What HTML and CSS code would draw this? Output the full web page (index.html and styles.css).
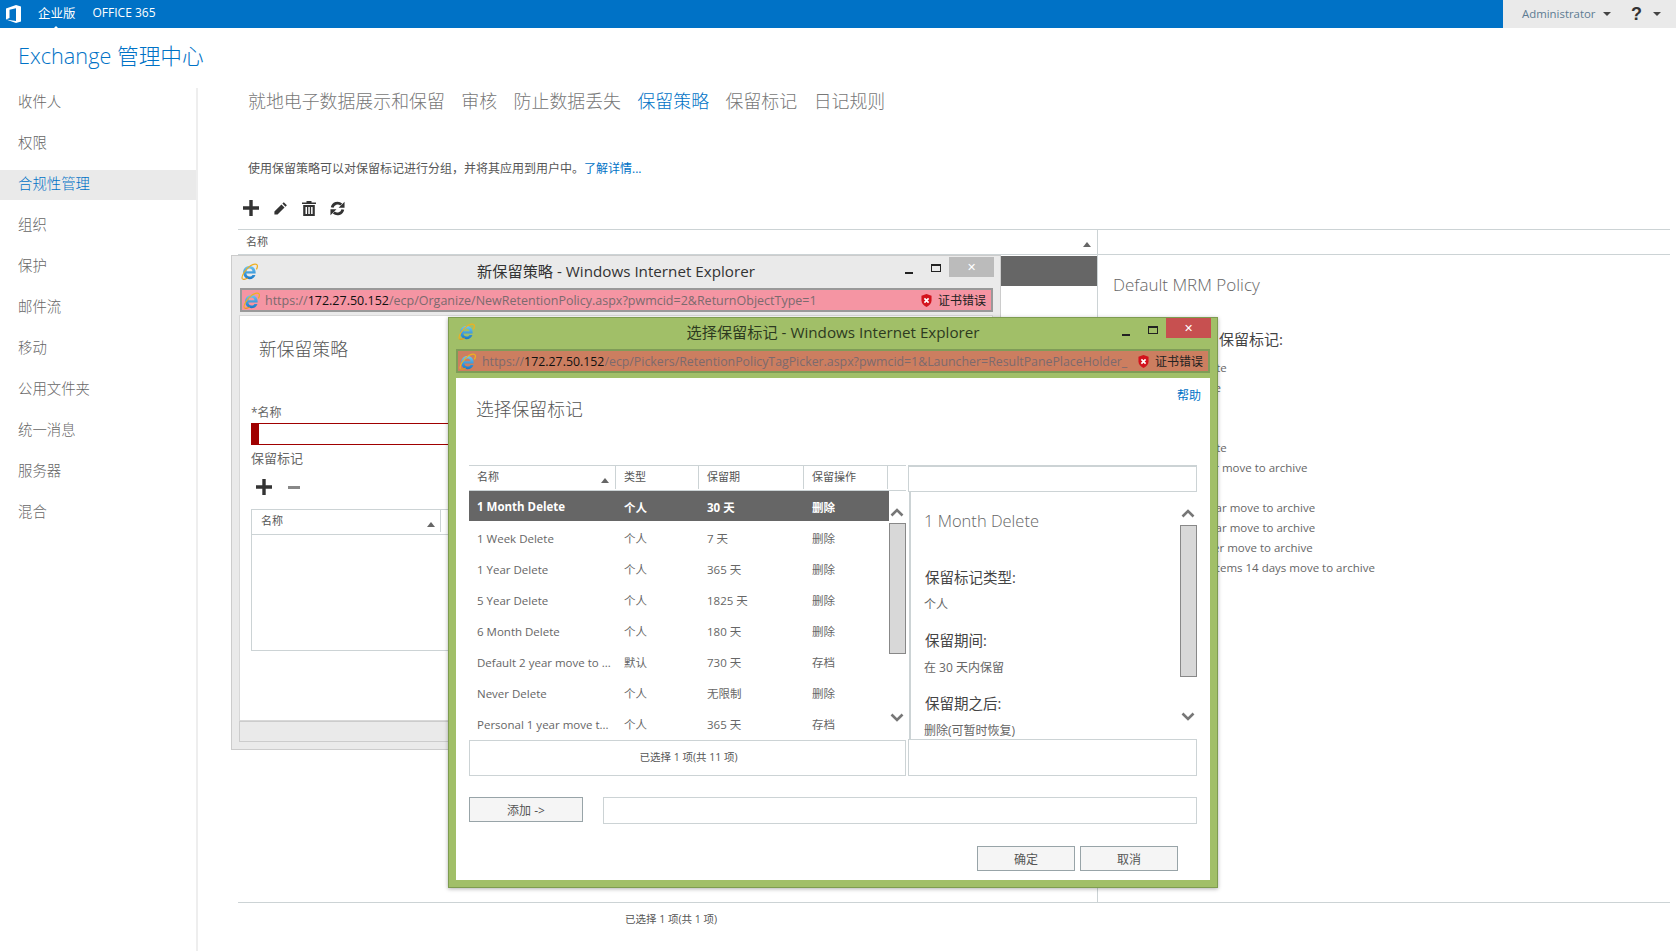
FILE: index.html
```html
<!DOCTYPE html>
<html lang="zh-CN">
<head>
<meta charset="utf-8">
<title>Exchange 管理中心</title>
<link rel="stylesheet" href="styles.css">
</head>
<body>
<svg class="defs" width="0" height="0" aria-hidden="true">
  <defs>
    <linearGradient id="ieblue" x1="0" y1="0" x2="0" y2="1">
      <stop offset="0" stop-color="#6fc6f2"/>
      <stop offset="1" stop-color="#1878c8"/>
    </linearGradient>
    <symbol id="ie" viewBox="0 0 18 18">
      <path fill-rule="evenodd" d="M9 3.200c3.800 0 6.500 2.900 6.500 6.700v1.300H5.700c.2 2 1.500 3.200 3.400 3.200 1.400 0 2.400-.6 3-1.700h3.200c-.9 2.800-3.300 4.400-6.200 4.400-3.900 0-6.800-2.900-6.800-7s2.800-6.900 6.700-6.900zM5.800 8.800h6.400c-.2-1.700-1.400-2.900-3.200-2.900S6.100 7.100 5.800 8.800z" fill="url(#ieblue)"/>
      <path d="M1.500 16.800C-.2 14.500 4.500 6.500 10 3c3.200-2 6.800-2.500 7.300-.4.300 1.400-.3 3-1 4.200" fill="none" stroke="#f0b020" stroke-width="1.300"/>
      <path d="M1.500 16.800c1.300 1 3.500.4 5.500-.9" fill="none" stroke="#e89a10" stroke-width="1.100"/>
    </symbol>
    <symbol id="shield" viewBox="0 0 12 14">
      <path d="M6 0l5.500 1.800V7c0 3.300-2.300 5.600-5.500 7C2.800 12.600.5 10.300.5 7V1.800z" fill="#d3121c"/>
      <path d="M3.700 4.700l4.600 4.600M8.300 4.700L3.700 9.300" stroke="#fff" stroke-width="1.800"/>
    </symbol>
    <symbol id="plus" viewBox="0 0 16 16"><path d="M6.300 0h3.400v6.300H16v3.400H9.700V16H6.300V9.700H0V6.300h6.300z" fill="#333"/></symbol>
    <symbol id="chev-up" viewBox="0 0 14 10"><path d="M1.500 8.500L7 3l5.500 5.500" fill="none" stroke="#777" stroke-width="2.600"/></symbol>
    <symbol id="chev-down" viewBox="0 0 14 10"><path d="M1.500 1.500L7 7l5.500-5.500" fill="none" stroke="#777" stroke-width="2.600"/></symbol>
  </defs>
</svg>

<header class="topbar">
  <div class="topbar-left">
    <svg class="office" viewBox="0 0 16 18" width="16" height="18"><path d="M0 3.500L10 0l5 1.500v15L10 18 0 14.500l10 1.500V3.200L3.500 4.700v8.200L0 14.500z" fill="#fff"/></svg>
    <span class="brand current">企业版</span>
    <span class="brand">OFFICE 365</span>
  </div>
  <div class="topbar-right">
    <span class="admin">Administrator</span>
    <span class="caret"></span>
    <span class="help">?</span>
    <span class="caret"></span>
  </div>
</header>

<h1 class="apptitle">Exchange 管理中心</h1>

<div class="shell">
  <nav class="sidebar">
    <a class="side-item">收件人</a>
    <a class="side-item">权限</a>
    <a class="side-item active">合规性管理</a>
    <a class="side-item">组织</a>
    <a class="side-item">保护</a>
    <a class="side-item">邮件流</a>
    <a class="side-item">移动</a>
    <a class="side-item">公用文件夹</a>
    <a class="side-item">统一消息</a>
    <a class="side-item">服务器</a>
    <a class="side-item">混合</a>
  </nav>

  <main class="content">
    <div class="tabs">
      <a>就地电子数据展示和保留</a>
      <a>审核</a>
      <a>防止数据丢失</a>
      <a class="active">保留策略</a>
      <a>保留标记</a>
      <a>日记规则</a>
    </div>
    <p class="intro">使用保留策略可以对保留标记进行分组，并将其应用到用户中。<a class="link">了解详情...</a></p>
    <div class="toolbar">
      <svg width="16" height="16"><use href="#plus"/></svg>
      <svg viewBox="0 0 16 16" width="15" height="15"><path d="M11.500 1.200l3.300 3.300-1.500 1.500L10 2.700zM9 3.700l3.300 3.300-7.500 7.500H1.500v-3.300z" fill="#333"/></svg>
      <svg viewBox="0 0 14 15" width="14" height="15"><path d="M4.500 0h5v1.400H14V3H0V1.400h4.500zM1.200 4h11.600v11H1.200zM3.500 6v7h1.500V6zm2.800 0v7h1.500V6zm2.800 0v7h1.500V6z" fill="#333" fill-rule="evenodd"/></svg>
      <svg viewBox="0 0 16 16" width="15" height="15"><path d="M2.300 7A5.900 5.900 0 0 1 12 3.800M13.700 9A5.900 5.900 0 0 1 4 12.200" fill="none" stroke="#333" stroke-width="3"/><path d="M15.500 .8v6.400H9.100zM.5 15.200V8.800h6.400z" fill="#333"/></svg>
    </div>
    <div class="listing">
      <section class="list-col">
        <div class="list-head"><span>名称</span><i class="sort"></i></div>
        <div class="list-selected"></div>
      </section>
      <aside class="detail-col">
        <div class="detail-head"></div>
        <h2 class="detail-name">Default MRM Policy</h2>
        <h3 class="detail-label">保留标记:</h3>
        <ul class="tag-list">
          <li>1 Month Delete</li>
          <li>1 Week Delete</li>
          <li>1 Year Delete</li>
          <li>5 Year Delete</li>
          <li>6 Month Delete</li>
          <li>Default 2 year move to archive</li>
          <li>Never Delete</li>
          <li>Personal 1 year move to archive</li>
          <li>Personal 5 year move to archive</li>
          <li>Personal never move to archive</li>
          <li>Recoverable Items 14 days move to archive</li>
        </ul>
      </aside>
    </div>
    <div class="status">已选择 1 项(共 1 项)</div>
  </main>
</div>

<section class="win win-back">
  <div class="win-title">
    <svg class="ie" width="17" height="17"><use href="#ie"/></svg>
    <span class="win-caption">新保留策略 - Windows Internet Explorer</span>
    <span class="win-min"></span>
    <span class="win-max"></span>
    <span class="win-close">✕</span>
  </div>
  <div class="addr">
    <svg class="ie" width="17" height="17"><use href="#ie"/></svg>
    <span class="url">https://<b>172.27.50.152</b>/ecp/Organize/NewRetentionPolicy.aspx?pwmcid=2&amp;ReturnObjectType=1</span>
    <svg class="shield" width="11" height="13"><use href="#shield"/></svg>
    <span class="cert">证书错误</span>
  </div>
  <div class="win-body back-body">
    <h2 class="dlg-title">新保留策略</h2>
    <label class="field-label">*名称</label>
    <div class="bad-input"></div>
    <div class="field-label2">保留标记</div>
    <div class="mini-tools">
      <svg width="16" height="16"><use href="#plus"/></svg>
      <span class="minus"></span>
    </div>
    <div class="mini-table">
      <div class="mini-head"><span>名称</span><i class="sort"></i></div>
    </div>
  </div>
  <div class="back-foot"></div>
</section>

<section class="win win-front">
  <div class="win-title">
    <svg class="ie" width="17" height="17"><use href="#ie"/></svg>
    <span class="win-caption">选择保留标记 - Windows Internet Explorer</span>
    <span class="win-min"></span>
    <span class="win-max"></span>
    <span class="win-close red">✕</span>
  </div>
  <div class="addr">
    <svg class="ie" width="17" height="17"><use href="#ie"/></svg>
    <span class="url">https://<b>172.27.50.152</b>/ecp/Pickers/RetentionPolicyTagPicker.aspx?pwmcid=1&amp;Launcher=ResultPanePlaceHolder_</span>
    <svg class="shield" width="11" height="13"><use href="#shield"/></svg>
    <span class="cert">证书错误</span>
  </div>
  <div class="win-body front-body">
    <div class="dlg-top">
      <h2 class="dlg-title">选择保留标记</h2>
      <a class="link helplink">帮助</a>
    </div>
    <div class="picker">
      <div class="pick-left">
        <div class="pick-head">
          <span class="c1">名称<i class="sort"></i></span>
          <span class="c2">类型</span>
          <span class="c3">保留期</span>
          <span class="c4">保留操作</span>
          <span class="c5"></span>
        </div>
        <div class="pick-scroller">
          <div class="rows">
            <div class="row sel"><span>1 Month Delete</span><span>个人</span><span>30 天</span><span>删除</span></div>
            <div class="row"><span>1 Week Delete</span><span>个人</span><span>7 天</span><span>删除</span></div>
            <div class="row"><span>1 Year Delete</span><span>个人</span><span>365 天</span><span>删除</span></div>
            <div class="row"><span>5 Year Delete</span><span>个人</span><span>1825 天</span><span>删除</span></div>
            <div class="row"><span>6 Month Delete</span><span>个人</span><span>180 天</span><span>删除</span></div>
            <div class="row"><span>Default 2 year move to ...</span><span>默认</span><span>730 天</span><span>存档</span></div>
            <div class="row"><span>Never Delete</span><span>个人</span><span>无限制</span><span>删除</span></div>
            <div class="row"><span>Personal 1 year move t...</span><span>个人</span><span>365 天</span><span>存档</span></div>
          </div>
          <div class="vscroll list-scroll">
            <svg width="14" height="10"><use href="#chev-up"/></svg>
            <div class="thumb"></div>
            <svg class="chev-bottom" width="14" height="10"><use href="#chev-down"/></svg>
          </div>
        </div>
        <div class="pick-summary">已选择 1 项(共 11 项)</div>
      </div>
      <div class="pick-right">
        <div class="search-box"></div>
        <div class="preview">
          <div class="preview-text">
            <h3 class="pv-name">1 Month Delete</h3>
            <h4 class="pv-label">保留标记类型:</h4>
            <p class="pv-value">个人</p>
            <h4 class="pv-label">保留期间:</h4>
            <p class="pv-value">在 30 天内保留</p>
            <h4 class="pv-label">保留期之后:</h4>
            <p class="pv-value">删除(可暂时恢复)</p>
          </div>
          <div class="vscroll pv-scroll">
            <svg width="14" height="10"><use href="#chev-up"/></svg>
            <div class="thumb"></div>
            <svg class="chev-bottom" width="14" height="10"><use href="#chev-down"/></svg>
          </div>
        </div>
        <div class="pv-foot"></div>
      </div>
    </div>
    <div class="add-row">
      <button class="btn add-btn">添加 -&gt;</button>
      <div class="added-box"></div>
    </div>
    <div class="actions">
      <button class="btn act-btn">确定</button>
      <button class="btn act-btn">取消</button>
    </div>
  </div>
</section>
</body>
</html>
```

FILE: styles.css
```css
* { box-sizing: border-box; }
html, body { margin: 0; height: 951px; overflow: hidden; }
body {
  position: relative;
  background: #fff;
  color: #666;
  font-family: "Open Sans", "Noto Sans CJK SC", sans-serif;
  font-size: 12px;
}
h1, h2, h3, h4, p, ul { margin: 0; padding: 0; font-weight: 400; }
ul { list-style: none; }
.defs { position: absolute; }
a { cursor: pointer; }
.link { color: #0072c6; }

/* top bar */
.topbar {
  height: 28px;
  background: #0072c6;
  display: flex;
  justify-content: space-between;
}
.topbar-left { display: flex; align-items: center; color: #fff; padding-left: 6px; }
.office { margin-right: 16px; }
.brand { font-size: 12px; margin-right: 17px; margin-top: -4px; position: relative; }
.brand.current { font-size: 12.500px; }
.brand.current::after {
  content: "";
  position: absolute;
  left: 14px;
  bottom: -8px;
  border: 4px solid transparent;
  border-top: 0;
  border-bottom-color: #fff;
}
.topbar-right {
  width: 173px;
  background: #eaeaea;
  display: flex;
  align-items: center;
  padding-left: 19px;
}
.admin { color: #5d7b92; font-size: 11.400px; width: 81px; margin-top: -2px; }
.caret {
  width: 0; height: 0;
  border: 4px solid transparent;
  border-bottom: 0;
  border-top-color: #444;
}
.help { font: 700 18px "Liberation Sans", sans-serif; color: #333; margin: 0 11px 0 20px; }

.apptitle {
  height: 60px;
  padding: 11px 0 0 18px;
  font-size: 21.700px;
  line-height: 34px;
  color: #0072c6;
  font-weight: 300;
}

/* shell */
.shell { display: flex; height: 863px; }
.sidebar { width: 198px; border-right: 2px solid #eee; flex: none; }
.side-item {
  display: block;
  height: 30px;
  margin-bottom: 11px;
  padding-left: 18px;
  font-size: 14.400px;
  font-weight: 300;
  line-height: 27px;
  color: #666;
}
.side-item.active { background: #eaeaea; color: #0072c6; }

.content { flex: 1; padding-left: 40px; padding-right: 6px; min-width: 0; }
.tabs { display: flex; gap: 16.500px; padding-left: 10px; height: 26px; font-size: 17.900px; font-weight: 300; line-height: 26px; color: #777; }
.tabs .active { color: #0072c6; }
.intro { margin: 46px 0 0 10px; font-size: 12px; line-height: 18px; color: #555; height: 18px; }
.toolbar { display: flex; align-items: center; gap: 14px; padding-left: 5px; height: 20px; margin-top: 20px; }

.listing { display: flex; height: 674px; margin-top: 11px; border-top: 1px solid #ccd3d5; border-bottom: 1px solid #ccd3d5; }
.list-col { width: 859px; flex: none; }
.list-head { position: relative; height: 25px; border-bottom: 1px solid #ccd3d5; padding: 4px 0 0 8px; font-size: 11px; line-height: 16px; color: #555; }
.sort {
  display: inline-block;
  width: 0; height: 0;
  border: 4px solid transparent;
  border-top: 0;
  border-bottom: 5px solid #666;
}
.list-head .sort { position: absolute; right: 6px; top: 12px; }
.list-selected { height: 30px; background: #666; margin-top: 1px; }
.detail-col { flex: 1; border-left: 1px solid #ccd3d5; }
.detail-head { height: 25px; border-bottom: 1px solid #ccd3d5; }
.detail-name { font-size: 17px; line-height: 26px; font-weight: 300; color: #666; padding: 17px 0 0 15px; }
.detail-label { margin: 30px 0 0 121px; font-size: 15px; line-height: 22px; color: #444; }
.tag-list { margin: 8px 0 0 46px; line-height: 20px; font-size: 11.500px; color: #666; }

.status { width: 859px; padding-left: 387px; margin-top: 7px; font-size: 10.500px; line-height: 18px; color: #555; }

/* windows */
.win { position: absolute; display: flex; flex-direction: column; }
.win-back { left: 231px; top: 255px; width: 770px; height: 495px; background: #eaeaea; border: 1px solid #ccc; padding: 0 7px; }
.win-front { left: 448px; top: 317px; width: 770px; height: 571px; background: #a1bf68; border: 1px solid #7e9c50; padding: 0 7px 7px; box-shadow: 0 1px 4px rgba(0,0,0,.3); }
.win-title { position: relative; height: 31px; flex: none; }
.win-title .ie { position: absolute; left: 2px; top: 7px; }
.win-caption { display: block; text-align: center; font-size: 15.200px; line-height: 30px; color: #333; }
.win-front .win-caption { line-height: 28px; color: #2d3a20; }
.win-front .win-title .ie { top: 5px; }
.win-min { position: absolute; right: 80px; top: 16px; width: 8px; height: 2px; background: #222; }
.win-max { position: absolute; right: 52px; top: 8px; width: 10px; height: 8px; border: 1px solid #222; border-top-width: 2px; }
.win-close { position: absolute; right: 0; top: 1px; width: 45px; height: 20px; background: #bbb; color: #fff; font-size: 11px; line-height: 20px; text-align: center; }
.win-close.red { background: #c75050; }
.win-back .win-close { right: -1px; }
.win-front .win-close { top: 0; right: -1px; }

.addr { display: flex; align-items: center; height: 24px; flex: none; margin: 1px 0 0 1px; padding: 0 5px 0 1px; background: #f595a3; border: 2px solid #999; overflow: hidden; white-space: nowrap; }
.win-front .addr { background: #cc7e60; border-color: #7f9c58; margin: -1px 0 5px 0; }
.win-front .win-title { height: 32px; }
.addr .ie { flex: none; margin-right: 5px; }
.win-front .addr .ie { margin-right: 6px; }
.url { flex: 1; min-width: 0; overflow: hidden; font-size: 12.500px; color: #7c6a6e; }
.win-front .url { font-size: 12.350px; }
.url b { font-weight: 400; color: #111; }
.shield { flex: none; margin: 0 6px 0 6px; }
.cert { flex: none; font-size: 12px; color: #222; }

.win-body { background: #fff; }
.back-body { height: 406px; margin-top: 3px; border: 1px solid #d8d8d8; padding: 0 0 0 11px; flex: none; overflow: hidden; }
.back-foot { height: 21px; background: #eaeaea; border: 1px solid #ccc; }
.dlg-title { font-size: 17.800px; line-height: 26px; color: #555; font-weight: 300; }
.back-body .dlg-title { padding: 20px 0 0 8px; height: 62px; }
.field-label { display: block; margin-top: 28px; font-size: 12px; line-height: 14px; color: #666; }
.bad-input { height: 22px; margin-top: 3px; border: 1px solid #a00000; border-left: 8px solid #a00000; }
.field-label2 { margin-top: 5px; font-size: 13px; line-height: 16px; color: #666; }
.mini-tools { display: flex; align-items: center; gap: 16px; padding-left: 5px; height: 16px; margin-top: 13px; }
.minus { width: 12px; height: 3px; background: #888; }
.mini-table { margin-top: 14px; width: 300px; height: 142px; border: 1px solid #ccd3d5; }
.mini-head { position: relative; height: 25px; border-bottom: 1px solid #ccd3d5; padding: 3px 0 0 9px; font-size: 11px; line-height: 16px; color: #555; }
.mini-head::after { content: ""; position: absolute; left: 188px; top: 0; bottom: 2px; width: 1px; background: #ccd3d5; }
.mini-head .sort { position: absolute; left: 175px; top: 12px; }

.front-body { flex: 1; padding: 0 13px 0 13px; display: flex; flex-direction: column; }
.dlg-top { height: 87px; display: flex; justify-content: space-between; flex: none; }
.front-body .dlg-title { padding: 18px 0 0 7px; }
.helplink { margin: 10px -4px 0 0; font-size: 12px; line-height: 16px; }

.picker { display: flex; gap: 2px; height: 311px; flex: none; }
.pick-left { width: 437px; flex: none; display: flex; flex-direction: column; }
.pick-head { display: grid; grid-template-columns: 147px 83px 105px 84px 18px; height: 26px; border-top: 1px solid #ccd3d5; border-bottom: 1px solid #ccd3d5; font-size: 11px; line-height: 22px; color: #555; flex: none; }
.pick-head span { position: relative; padding-left: 8px; border-right: 1px solid #ccd3d5; height: 23px; }
.pick-head .c5 { border-right: 0; }
.pick-head .sort { position: absolute; right: 6px; top: 12px; }
.pick-scroller { display: flex; height: 249px; flex: none; overflow: hidden; }
.rows { width: 420px; flex: none; }
.row { display: grid; grid-template-columns: 147px 83px 105px 85px; height: 31px; align-items: center; font-size: 11.500px; color: #666; }
.row span { padding: 1px 0 0 8px; white-space: nowrap; overflow: hidden; }
.row span:first-child { padding-left: 8px; }
.row.sel { height: 30px; margin-bottom: 1px; background: #666; color: #fff; font-weight: 700; }
.vscroll { position: relative; width: 17px; flex: none; }
.vscroll svg { position: absolute; left: 1px; top: 16px; }
.vscroll .chev-bottom { top: auto; }
.thumb { position: absolute; left: 0; right: 0; background: #d8d8d8; border: 1px solid #888; }
.list-scroll .thumb { top: 32px; height: 131px; }
.list-scroll .chev-bottom { bottom: 17px; }
.pick-summary { flex: 1; border: 1px solid #ccd3d5; text-align: center; font-size: 10.500px; line-height: 32px; color: #555; padding-left: 2px; }

.pick-right { flex: 1; display: flex; flex-direction: column; min-width: 0; }
.search-box { height: 27px; border: 1px solid #ccd3d5; border-top-width: 2px; flex: none; }
.preview { display: flex; height: 247px; flex: none; margin-left: 1px; border-left: 2px solid #ccd3d5; overflow: hidden; }
.preview-text { flex: 1; padding: 17px 0 0 14px; }
.pv-name { font-size: 16.500px; line-height: 24px; font-weight: 300; color: #666; margin: 0 0 34px -1px; }
.pv-label { font-size: 14.500px; line-height: 22px; color: #444; }
.pv-value { font-size: 12px; line-height: 18px; color: #666; margin: 7px 0 16px -1px; }
.pv-scroll { position: relative; }
.pv-scroll svg { left: 1px; top: 16px; }
.pv-scroll .thumb { top: 33px; height: 152px; }
.pv-scroll .chev-bottom { top: auto; bottom: 17px; }
.pv-foot { flex: 1; border: 1px solid #ccd3d5; }

.add-row { display: flex; gap: 20px; margin-top: 21px; flex: none; }
.btn { font-family: inherit; background: #f5f5f5; border: 1px solid #98a4a8; color: #555; font-size: 12px; padding: 0; }
.add-btn { width: 114px; height: 25px; }
.added-box { flex: 1; height: 27px; border: 1px solid #ccd3d5; }
.actions { display: flex; justify-content: flex-end; gap: 5px; margin: 22px 19px 0 0; }
.act-btn { width: 98px; height: 25px; }
```
